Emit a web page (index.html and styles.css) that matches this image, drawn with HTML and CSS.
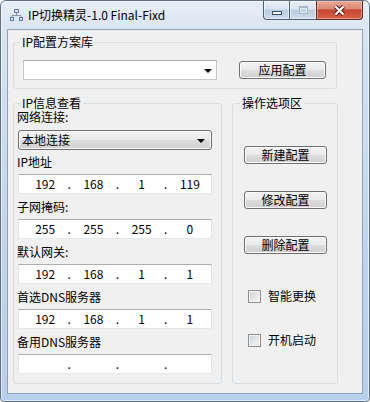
FILE: index.html
```html
<!DOCTYPE html>
<html lang="zh-CN">

<head>
  <meta charset="UTF-8" />
  <meta name="viewport" content="width=device-width, initial-scale=1.0" />
  <title>IP切换精灵-1.0 Final-Fixd</title>
  <link rel="stylesheet" href="styles.css">
</head>

<body>
  <div class="window">
    <div class="titlebar">
      <svg class="app-icon" width="13" height="12" viewBox="0 0 13 12">
        <rect x="4.5" y="0.5" width="4" height="3" fill="#d6e5f5" stroke="#5b7fae" />
        <path d="M6.5 4v2.5M2 6.5h9M2 6.5v2M11 6.5v2" stroke="#8a96a4" fill="none" />
        <rect x="0.5" y="8.5" width="3" height="3" fill="#d6e5f5" stroke="#5b7fae" />
        <rect x="9.5" y="8.5" width="3" height="3" fill="#d6e5f5" stroke="#5b7fae" />
      </svg>
      <span class="title">IP切换精灵-1.0 Final-Fixd</span>
      <div class="caption-buttons">
        <span class="cap cap-min"><i></i></span>
        <span class="cap cap-max"><i></i></span>
        <span class="cap cap-close">
          <svg width="13" height="11" viewBox="0 0 13 11">
            <path d="M2.5 1.5L10.5 9.5M10.5 1.5L2.5 9.5" stroke="#4a1a12" stroke-width="4.2" />
            <path d="M2.5 1.5L10.5 9.5M10.5 1.5L2.5 9.5" stroke="#fff" stroke-width="2.2" />
          </svg>
        </span>
      </div>
    </div>

    <div class="client">
      <fieldset class="group group-plans">
        <legend>IP配置方案库</legend>
        <div class="plans-row">
          <div class="combo combo-edit"><span class="arrow"></span></div>
          <button type="button" class="btn btn-apply">应用配置</button>
        </div>
      </fieldset>

      <div class="lower">
        <fieldset class="group group-info">
          <legend>IP信息查看</legend>
          <div class="info-col">
            <label class="field-label">网络连接:</label>
            <div class="combo combo-list">本地连接<span class="arrow"></span></div>

            <label class="field-label">IP地址</label>
            <div class="ipbox">
              <span>192</span><span class="dot">.</span><span>168</span><span class="dot">.</span><span>1</span><span class="dot">.</span><span>119</span>
            </div>

            <label class="field-label">子网掩码:</label>
            <div class="ipbox">
              <span>255</span><span class="dot">.</span><span>255</span><span class="dot">.</span><span>255</span><span class="dot">.</span><span>0</span>
            </div>

            <label class="field-label">默认网关:</label>
            <div class="ipbox">
              <span>192</span><span class="dot">.</span><span>168</span><span class="dot">.</span><span>1</span><span class="dot">.</span><span>1</span>
            </div>

            <label class="field-label">首选DNS服务器</label>
            <div class="ipbox">
              <span>192</span><span class="dot">.</span><span>168</span><span class="dot">.</span><span>1</span><span class="dot">.</span><span>1</span>
            </div>

            <label class="field-label">备用DNS服务器</label>
            <div class="ipbox">
              <span></span><span class="dot">.</span><span></span><span class="dot">.</span><span></span><span class="dot">.</span><span></span>
            </div>
          </div>
        </fieldset>

        <fieldset class="group group-ops">
          <legend>操作选项区</legend>
          <div class="ops-col">
            <button type="button" class="btn btn-op btn-first">新建配置</button>
            <button type="button" class="btn btn-op">修改配置</button>
            <button type="button" class="btn btn-op">删除配置</button>
            <label class="check-row check-first"><span class="checkbox"></span>智能更换</label>
            <label class="check-row"><span class="checkbox"></span>开机启动</label>
          </div>
        </fieldset>
      </div>
    </div>
  </div>
</body>

</html>
```

FILE: styles.css
```css
* {
  box-sizing: border-box;
}

body {
  margin: 0;
  font-family: "Noto Sans CJK SC", "Liberation Sans", sans-serif;
  font-size: 12px;
  line-height: 14px;
  color: #000;
  background: #fff;
}

/* window frame */
.window {
  width: 370px;
  height: 402px;
  display: flex;
  flex-direction: column;
  padding: 0 6px 7px 6px;
  border: 1px solid #5f7189;
  border-radius: 6px 6px 4px 4px;
  background: linear-gradient(180deg, #e6edf6 0%, #d6e3f1 10%, #c0d5ec 60%, #b7cfea 100%);
  box-shadow: inset 0 0 0 1px rgba(255, 255, 255, 0.6);
}

.titlebar {
  height: 28px;
  flex: none;
  display: flex;
  align-items: center;
  padding-left: 3px;
}

.app-icon {
  display: block;
  margin-right: 5px;
}

.title {
  color: #000;
  font-size: 12px;
}

.caption-buttons {
  margin-left: auto;
  align-self: flex-start;
  display: flex;
  height: 19px;
}

.cap {
  height: 19px;
  display: flex;
  align-items: center;
  justify-content: center;
  border: 1px solid #4e6079;
  border-top: none;
}

.cap-min,
.cap-max {
  background: linear-gradient(180deg, #e9f0f8 0%, #d8e3f0 45%, #bccde2 50%, #cddbec 100%);
  box-shadow: inset 0 0 0 1px rgba(255, 255, 255, 0.5);
}

.cap-min {
  width: 26px;
  border-bottom-left-radius: 4px;
  border-right: none;
}

.cap-min i {
  width: 10px;
  height: 4px;
  margin-top: 5px;
  background: #fff;
  border: 1px solid #3d4b5e;
}

.cap-max {
  width: 27px;
  border-right: none;
}

.cap-max i {
  width: 9px;
  height: 8px;
  border: 1px solid #a7b6c8;
  border-top-width: 2px;
  box-shadow: inset 0 0 0 1px #e3eaf3;
}

.cap-close {
  width: 47px;
  border-bottom-right-radius: 4px;
  border-color: #5b2a22;
  background: linear-gradient(180deg, #eba796 0%, #dc8a74 42%, #c7472f 50%, #d4604a 100%);
  box-shadow: inset 0 0 0 1px rgba(255, 220, 210, 0.45);
}

.cap-close svg {
  display: block;
}

/* client area */
.client {
  flex: 1;
  background: #f0f0f0;
  border: 1px solid #8ea2bb;
  padding: 5px 0 0 5px;
}

.group {
  margin: 0;
  padding: 0;
  border: 1px solid #d5dfe5;
  border-radius: 3px;
  min-width: 0;
}

.group legend {
  margin-left: 6px;
  padding: 0 2px;
  line-height: 14px;
}

.group-plans {
  width: 324px;
}

.plans-row {
  display: flex;
  align-items: center;
  padding: 11px 10px 8px 9px;
}

.lower {
  display: flex;
  margin-top: 7px;
}

.group-info {
  width: 209px;
}

.info-col {
  display: flex;
  flex-direction: column;
  padding: 0 9px 9px 4px;
}

.field-label {
  height: 14px;
  margin: 5px 0 0 -1px;
}

.field-label:first-child {
  margin-top: 0;
}

.group-ops {
  width: 106px;
  margin-left: 10px;
}

.group-ops legend {
  margin-left: 7px;
}

.ops-col {
  display: flex;
  flex-direction: column;
  padding: 0 10px 0 11px;
}

/* controls */
.btn {
  font: inherit;
  color: #000;
  padding: 0;
  height: 18px;
  border: 1px solid #707070;
  border-radius: 3px;
  background: linear-gradient(180deg, #f2f2f2 0%, #ebebeb 48%, #dddddd 52%, #cfcfcf 100%);
  box-shadow: inset 0 0 0 1px #fbfbfb;
  cursor: pointer;
}

.btn-apply {
  width: 87px;
  margin-left: 22px;
}

.btn-op {
  width: 83px;
  margin-top: 27px;
}

.btn-op.btn-first {
  margin-top: 36px;
}

.combo {
  position: relative;
  height: 20px;
  display: flex;
  align-items: center;
}

.combo .arrow {
  position: absolute;
  top: 8px;
  width: 0;
  height: 0;
  border-left: 4px solid transparent;
  border-right: 4px solid transparent;
  border-top: 4px solid #000;
}

.combo-edit {
  width: 194px;
  background: #fff;
  border: 1px solid #c6c8cc;
  border-top-color: #abadb3;
}

.combo-edit .arrow {
  right: 4px;
}

.combo-list {
  width: 194px;
  margin-top: 6px;
  padding-left: 3px;
  border: 1px solid #707070;
  border-radius: 3px;
  background: linear-gradient(180deg, #f2f2f2 0%, #ebebeb 48%, #dddddd 52%, #cfcfcf 100%);
  box-shadow: inset 0 0 0 1px #fbfbfb;
}

.combo-list + .field-label {
  margin-top: 5px;
}

.combo-list .arrow {
  right: 6px;
}

.ipbox {
  width: 194px;
  height: 20px;
  margin-top: 5px;
  display: grid;
  grid-template-columns: 1fr 6px 1fr 6px 1fr 6px 1fr;
  align-items: center;
  padding-left: 5px;
  text-align: center;
  line-height: 18px;
  background: #fff;
  border: 1px solid #e2e3ea;
  border-top-color: #abadb3;
  border-bottom-color: #e3e9ef;
}

.ipbox + .field-label {
  margin-top: 6px;
}

.check-row {
  display: flex;
  align-items: center;
  height: 14px;
  margin: 30px 0 0 4px;
}

.check-row.check-first {
  margin-top: 35px;
}

.checkbox {
  width: 13px;
  height: 13px;
  margin-right: 7px;
  border: 1px solid #8e8f8f;
  background: linear-gradient(135deg, #cdd0d4 0%, #e6e7e9 55%, #f6f6f6 100%);
  box-shadow: inset 0 0 0 1px #f4f4f4;
}
```
